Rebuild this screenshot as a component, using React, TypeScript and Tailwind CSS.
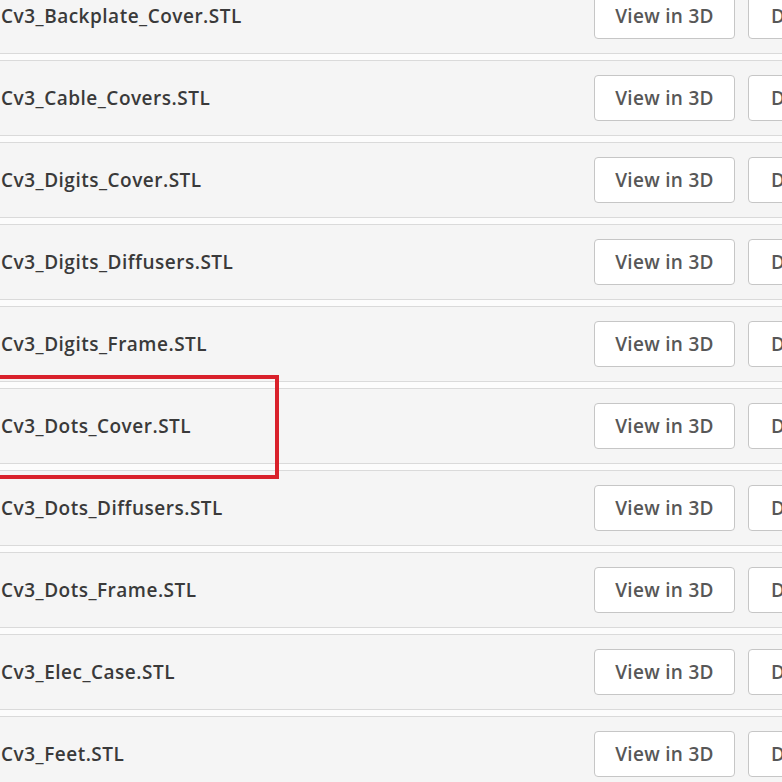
const files = [
  "Cv3_Backplate_Cover.STL",
  "Cv3_Cable_Covers.STL",
  "Cv3_Digits_Cover.STL",
  "Cv3_Digits_Diffusers.STL",
  "Cv3_Digits_Frame.STL",
  "Cv3_Dots_Cover.STL",
  "Cv3_Dots_Diffusers.STL",
  "Cv3_Dots_Frame.STL",
  "Cv3_Elec_Case.STL",
  "Cv3_Feet.STL",
];

function FileRow({ name }: { name: string }) {
  return (
    <div className="flex h-[76px] shrink-0 items-center border-y border-[#dadada] bg-[#f5f5f5]">
      <div className="w-[594px] shrink-0 pl-[1px] text-[19px] font-semibold tracking-[0.5px] text-[#3a3a3a]">
        {name}
      </div>
      <div className="flex items-center gap-[13px]">
        <button className="flex h-[46px] w-[141px] items-center justify-center rounded-[4px] border border-[#c6c6c6] bg-white text-[19px] font-semibold tracking-[0.3px] text-[#575757]">
          View in 3D
        </button>
        <button className="flex h-[46px] w-[141px] items-center justify-center rounded-[4px] border border-[#c6c6c6] bg-white text-[19px] font-semibold tracking-[0.3px] text-[#575757]">
          Download
        </button>
      </div>
    </div>
  );
}

export default function App() {
  return (
    <div className="relative h-[782px] w-[782px] overflow-hidden bg-[#fcfcfc] font-['Open_Sans',sans-serif]">
      <div className="-mt-[22px] flex w-[1000px] flex-col gap-[6px]">
        {files.map((f) => (
          <FileRow key={f} name={f} />
        ))}
      </div>
      {/* highlight frame */}
      <div className="absolute -left-[4px] top-[375px] h-[104px] w-[283px] border-[4px] border-[#d9212b]" />
    </div>
  );
}
